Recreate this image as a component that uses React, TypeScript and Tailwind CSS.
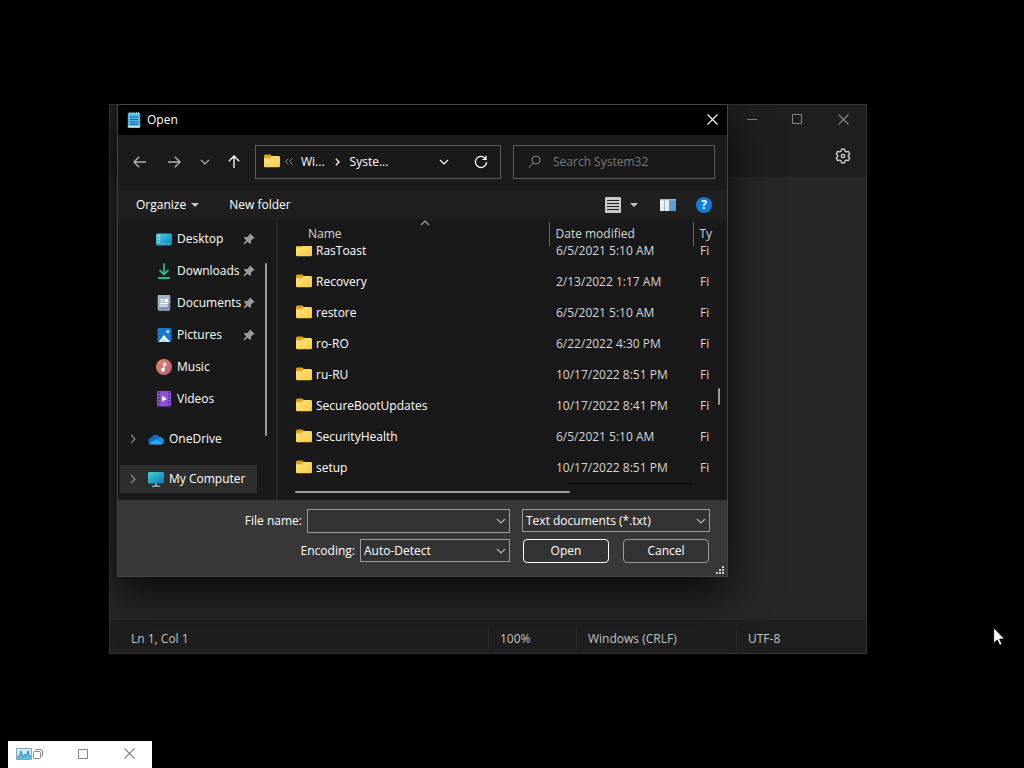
import type { ReactNode } from "react";

type IconProps = { className?: string };

const files = [
  { name: "RasToast", date: "6/5/2021 5:10 AM" },
  { name: "Recovery", date: "2/13/2022 1:17 AM" },
  { name: "restore", date: "6/5/2021 5:10 AM" },
  { name: "ro-RO", date: "6/22/2022 4:30 PM" },
  { name: "ru-RU", date: "10/17/2022 8:51 PM" },
  { name: "SecureBootUpdates", date: "10/17/2022 8:41 PM" },
  { name: "SecurityHealth", date: "6/5/2021 5:10 AM" },
  { name: "setup", date: "10/17/2022 8:51 PM" },
];

function Folder({ className = "" }: IconProps) {
  return (
    <svg viewBox="0 0 16 14" className={`h-3.5 w-4 shrink-0 ${className}`} aria-hidden="true">
      <defs>
        <linearGradient id="folder-face" x1="0" y1="0" x2="1" y2="1">
          <stop offset="0" stopColor="#ffe680" />
          <stop offset="1" stopColor="#f9c845" />
        </linearGradient>
      </defs>
      <path d="M0 2a1.500 1.500 0 0 1 1.500-1.500h4.500a1.500 1.500 0 0 1 1.500 1.500h7A1.500 1.500 0 0 1 16 3.500v3H0z" fill="#e3a21a" />
      <path d="M0 4.300h5.500L7.500 2h7A1.500 1.500 0 0 1 16 3.500v8.500a1.200 1.200 0 0 1-1.200 1.200H1.200A1.200 1.200 0 0 1 0 12z" fill="url(#folder-face)" />
    </svg>
  );
}

function Chevron({ className = "" }: IconProps) {
  return (
    <svg viewBox="0 0 10 6" className={`h-1.5 w-2.5 ${className}`} fill="none" stroke="currentColor" strokeWidth="1.2" aria-hidden="true">
      <path d="M1 1l4 4 4-4" />
    </svg>
  );
}

function Cross({ className = "" }: IconProps) {
  return (
    <svg viewBox="0 0 11 11" className={`size-[11px] ${className}`} fill="none" stroke="currentColor" strokeWidth="1.1" aria-hidden="true">
      <path d="M.5.5l10 10M10.500.5l-10 10" />
    </svg>
  );
}

function Maximize() {
  return (
    <svg viewBox="0 0 10 10" className="size-2.5" fill="none" stroke="currentColor" aria-hidden="true">
      <path d="M.5.5h9v9h-9z" />
    </svg>
  );
}

function Pin() {
  return (
    <svg viewBox="0 0 12 12" className="size-3 text-[#9a9a9a]" fill="currentColor" aria-hidden="true">
      <path d="M7.200.4l4.400 4.400-1 1-.7-.1-1.900 1.900.2 2.300-1.200 1.200-2.300-2.300L1.300 11.500l-.8-.8 2.700-3.400L.9 5l1.200-1.200 2.300.2 1.900-1.900-.1-.7z" />
    </svg>
  );
}

const desktopIcon = (
  <svg viewBox="0 0 16 13" className="h-[13px] w-4" aria-hidden="true">
    <defs>
      <linearGradient id="desk" x1="0" y1="0" x2="1" y2="1">
        <stop offset="0" stopColor="#4fd3ee" />
        <stop offset="1" stopColor="#0b7fb5" />
      </linearGradient>
    </defs>
    <rect y=".5" width="16" height="12" rx="1.500" fill="url(#desk)" />
    <path d="M2 2.500h1.500V4H2zM2 5.500h1.500V7H2zM2 8.500h1.500V10H2z" fill="#d5f6ff" />
    <path d="M4.500 11h1.200M7 11h1.200M9.500 11h1.200M12 11h1.500" stroke="#9be4f7" />
  </svg>
);

const downloadIcon = (
  <svg viewBox="0 0 14 16" className="h-4 w-3.5" fill="none" stroke="#2eb48a" strokeWidth="1.800" aria-hidden="true">
    <path d="M7 .5v11M2.500 7L7 11.500 11.500 7M1 15h12" />
  </svg>
);

const documentIcon = (
  <svg viewBox="0 0 14 16" className="h-4 w-3.5" aria-hidden="true">
    <rect x=".8" width="12.400" height="16" rx="1.200" fill="#8195ae" />
    <path d="M.8 1.200A1.200 1.200 0 0 1 2 0h10a1.200 1.200 0 0 1 1.200 1.200V8L.8 14z" fill="#a2b3c8" />
    <path d="M3 4.500h3.500M3 6.500h3.500M3 8.700h8M3 11h8" stroke="#fff" strokeWidth="1.200" />
    <path d="M7.500 3.800h3.500v3.300H7.500z" fill="#fff" />
  </svg>
);

const pictureIcon = (
  <svg viewBox="0 0 15 14" className="h-3.5 w-[15px]" aria-hidden="true">
    <rect x=".5" width="14" height="14" rx="1.500" fill="#1c78cd" />
    <path d="M1.500 14L7 7l6 7z" fill="#f3faff" />
    <path d="M3 14l4-3.500L11.500 14z" fill="#b9dbf6" />
    <circle cx="10.800" cy="3.600" r="1.400" fill="#fff" />
  </svg>
);

const musicIcon = (
  <svg viewBox="0 0 16 16" className="size-4" aria-hidden="true">
    <defs>
      <linearGradient id="music" x1="0" y1="0" x2="1" y2="1">
        <stop offset="0" stopColor="#e88962" />
        <stop offset="1" stopColor="#b05a80" />
      </linearGradient>
    </defs>
    <circle cx="8" cy="8" r="8" fill="url(#music)" />
    <circle cx="6.800" cy="10.800" r="1.900" fill="#fff" />
    <path d="M8.100 10.800V3.500c.4 1.500 2.200 1.500 2.400 3" fill="none" stroke="#fff" strokeWidth="1.300" />
  </svg>
);

const videoIcon = (
  <svg viewBox="0 0 14 16" className="h-4 w-3.5" aria-hidden="true">
    <rect width="14" height="15.500" rx="1.200" fill="#8b52d8" />
    <path d="M2 1v14M12 1v14" stroke="#4b2395" strokeWidth="1.600" strokeDasharray="1.700 1.500" />
    <path d="M5 4.800v6L10 7.800z" fill="#fff" />
  </svg>
);

const cloudIcon = (
  <svg viewBox="0 0 16 11" className="h-[11px] w-4" aria-hidden="true">
    <path d="M3.500 10.500A3.500 3.500 0 0 1 3.200 3.600 5 5 0 0 1 12 3.200 3.700 3.700 0 0 1 12.500 10.500z" fill="#0f6cbf" />
    <path d="M1 9.500L8.500 5l6.700 4A3 3 0 0 1 12.800 10.500H3.500A3.500 3.500 0 0 1 1 9.500z" fill="#2aa6ee" />
    <path d="M9 5.200l3-2a3.700 3.700 0 0 1 3.500 5.600z" fill="#1b8ddd" />
  </svg>
);

const computerIcon = (
  <svg viewBox="0 0 16 16" className="size-4" aria-hidden="true">
    <defs>
      <linearGradient id="screen" x1="0" y1="0" x2="1" y2="1">
        <stop offset="0" stopColor="#42d6d2" />
        <stop offset="1" stopColor="#1173b8" />
      </linearGradient>
    </defs>
    <rect y="1" width="16" height="11.500" rx="1" fill="url(#screen)" />
    <path d="M7 12.500h2V15H7z" fill="#93a4b4" />
    <path d="M4 15.200h8" stroke="#c9d3dc" />
  </svg>
);

const places: { label: string; icon: ReactNode; pinned: boolean }[] = [
  { label: "Desktop", icon: desktopIcon, pinned: true },
  { label: "Downloads", icon: downloadIcon, pinned: true },
  { label: "Documents", icon: documentIcon, pinned: true },
  { label: "Pictures", icon: pictureIcon, pinned: true },
  { label: "Music", icon: musicIcon, pinned: false },
  { label: "Videos", icon: videoIcon, pinned: false },
];

function TreeItem({ label, icon, selected = false }: { label: string; icon: ReactNode; selected?: boolean }) {
  return (
    <button
      type="button"
      className={`ml-0.5 flex h-7 w-[137px] items-center text-left ${selected ? "bg-[#2e2e2e]" : ""}`}
    >
      <span className="flex w-7 items-center pl-2">
        <Chevron className="-rotate-90 text-[#8a8a8a]" />
      </span>
      <span className="flex w-[21px] items-center">{icon}</span>
      <span className="whitespace-nowrap">{label}</span>
    </button>
  );
}

function Notepad() {
  const segment = "flex h-5 items-center border-l border-[#2c2c2c] pl-[11px]";
  return (
    <section
      aria-label="Notepad"
      className="absolute left-[109px] top-[104px] flex h-[550px] w-[758px] flex-col border border-[#353535] bg-[#272727] text-[#c4c4c4]"
    >
      <header className="h-[72px] bg-[#1f1f1f]">
        <div className="flex h-7 justify-end text-[#858585]">
          <button type="button" aria-label="Minimize" className="flex w-[45px] items-center justify-center">
            <svg viewBox="0 0 10 10" className="size-2.5" stroke="currentColor" aria-hidden="true">
              <path d="M0 5.500h10" />
            </svg>
          </button>
          <button type="button" aria-label="Maximize" className="flex w-[46px] items-center justify-center">
            <Maximize />
          </button>
          <button type="button" aria-label="Close" className="flex w-[46px] items-center justify-center">
            <Cross />
          </button>
        </div>
        <div className="flex h-[46px] items-center justify-end pr-[15px]">
          <button type="button" aria-label="Settings" className="text-[#dedede]">
            <svg viewBox="0 0 16 16" className="size-4" fill="none" stroke="currentColor" strokeWidth="1.200" strokeLinejoin="round" aria-hidden="true">
              <path d="M6.500 1.200h3l.5 2 1.300.8 2-.6 1.500 2.600L13.300 7.400v1.200l1.500 1.400-1.500 2.600-2-.6-1.300.8-.5 2h-3l-.5-2-1.300-.8-2 .6L1.200 10l1.500-1.400V7.400L1.200 6l1.500-2.600 2 .6L6 3.200z" />
              <circle cx="8" cy="8" r="1.700" />
            </svg>
          </button>
        </div>
      </header>
      <div className="flex-1" />
      <footer className="flex h-[33px] items-center bg-[#1f1f1f] pt-1 text-[12px]">
        <span className="flex-1 pl-[21px]">Ln 1, Col 1</span>
        <span className={`${segment} w-[88px]`}>100%</span>
        <span className={`${segment} w-[160px]`}>Windows (CRLF)</span>
        <span className={`${segment} w-[130px]`}>UTF-8</span>
      </footer>
    </section>
  );
}

function NavigationBar() {
  return (
    <div className="flex h-[55px] items-center bg-[#1b1b1b] pb-0.5 pl-1 pr-3 text-white">
      <button type="button" aria-label="Back" className="flex w-[35px] justify-center text-[#b0b0b0]">
        <svg viewBox="0 0 13 12" className="h-3 w-[13px]" fill="none" stroke="currentColor" strokeWidth="1.400" aria-hidden="true">
          <path d="M13 6H1M6.200.8L1 6l5.200 5.200" />
        </svg>
      </button>
      <button type="button" aria-label="Forward" className="flex w-[35px] justify-center text-[#b0b0b0]">
        <svg viewBox="0 0 13 12" className="h-3 w-[13px]" fill="none" stroke="currentColor" strokeWidth="1.400" aria-hidden="true">
          <path d="M0 6h12M6.800.8L12 6l-5.200 5.200" />
        </svg>
      </button>
      <button type="button" aria-label="Recent locations" className="flex w-[26px] justify-center text-[#b0b0b0]">
        <Chevron />
      </button>
      <button type="button" aria-label="Up" className="flex w-8 justify-center">
        <svg viewBox="0 0 12 13" className="h-[13px] w-3" fill="none" stroke="currentColor" strokeWidth="1.300" aria-hidden="true">
          <path d="M6 13V1M.8 6.200L6 1l5.200 5.200" />
        </svg>
      </button>
      <div className="ml-[5px] flex h-[34px] flex-1 items-center border border-[#5c5c5c] bg-[#191919] pl-2 pr-3">
        <Folder className="mb-0.5" />
        <svg viewBox="0 0 8 7" className="ml-[5px] h-[7px] w-2" fill="none" stroke="#8c8c8c" aria-hidden="true">
          <path d="M3.500.5l-3 3 3 3M7.500.5l-3 3 3 3" />
        </svg>
        <button type="button" className="ml-2">Wi...</button>
        <svg viewBox="0 0 5 8" className="ml-2.5 h-2 w-[5px]" fill="none" stroke="currentColor" strokeWidth="1.300" aria-hidden="true">
          <path d="M.8.8L4 4 .8 7.200" />
        </svg>
        <button type="button" className="ml-2.5">Syste...</button>
        <button type="button" aria-label="Previous locations" className="ml-auto">
          <Chevron />
        </button>
        <button type="button" aria-label="Refresh" className="ml-[25px]">
          <svg viewBox="0 0 14 14" className="size-3.5" fill="none" stroke="currentColor" strokeWidth="1.300" aria-hidden="true">
            <path d="M11.800 4A5.600 5.600 0 1 0 12.600 7M12 .8v3.500H8.500" />
          </svg>
        </button>
      </div>
      <label className="ml-3 flex h-[34px] w-[202px] items-center border border-[#5c5c5c] bg-[#191919] pl-3.5 pr-2">
        <svg viewBox="0 0 13 14" className="h-3.5 w-[13px] shrink-0" fill="none" stroke="#858585" aria-hidden="true">
          <circle cx="8" cy="5" r="4" />
          <path d="M5.200 8L.8 12.800" />
        </svg>
        <input
          type="text"
          aria-label="Search System32"
          placeholder="Search System32"
          className="ml-3 min-w-0 flex-1 bg-transparent text-white outline-none placeholder:text-[#7a7a7a]"
        />
      </label>
    </div>
  );
}

function CommandBar() {
  return (
    <div className="flex h-[30px] items-center bg-[#1f1f1f] pl-[18px] pr-[15px] text-white">
      <button type="button" className="flex items-center gap-[5px]">
        Organize
        <svg viewBox="0 0 8 4" className="h-1 w-2" fill="#c8c8c8" aria-hidden="true">
          <path d="M0 0h8L4 4z" />
        </svg>
      </button>
      <button type="button" className="ml-[30px]">New folder</button>
      <button type="button" aria-label="Change your view" className="ml-auto">
        <svg viewBox="0 0 16 16" className="size-4" aria-hidden="true">
          <rect width="16" height="16" rx="1" fill="#c9c9c9" />
          <path d="M2 3.500h12M2 6.500h12M2 9.500h12M2 12.500h12" stroke="#1f1f1f" />
        </svg>
      </button>
      <button type="button" aria-label="More views" className="ml-[9px]">
        <svg viewBox="0 0 8 4" className="h-1 w-2" fill="#c8c8c8" aria-hidden="true">
          <path d="M0 0h8L4 4z" />
        </svg>
      </button>
      <button type="button" aria-label="Preview pane" className="ml-[22px]">
        <svg viewBox="0 0 16 12" className="h-3 w-4" aria-hidden="true">
          <rect width="16" height="12" fill="#e9eef2" />
          <path d="M0 0h16v1.200H0z" fill="#a9b4bd" />
          <path d="M9 1.200h7V12H9z" fill="#5f9fd0" />
          <path d="M4.500 1.200V12" stroke="#9eb3c4" />
        </svg>
      </button>
      <button
        type="button"
        aria-label="Help"
        className="ml-5 flex size-4 items-center justify-center rounded-full bg-[#0e7fd6] text-[12px] font-bold leading-4"
      >
        ?
      </button>
    </div>
  );
}

function Sidebar() {
  return (
    <nav aria-label="Places" className="relative w-[158px] shrink-0 pt-[3px] text-white">
      {places.map((place) => (
        <button key={place.label} type="button" className="flex h-8 w-full items-center pl-[38px] text-left">
          <span className="flex w-[21px] shrink-0 items-center">
            <span className="flex w-4 justify-center">{place.icon}</span>
          </span>
          <span className="w-[66px] whitespace-nowrap">{place.label}</span>
          {place.pinned && <Pin />}
        </button>
      ))}
      <div className="mt-[10px] flex flex-col gap-3">
        <TreeItem label="OneDrive" icon={cloudIcon} />
        <TreeItem label="My Computer" icon={computerIcon} selected />
      </div>
      <div className="absolute left-[147px] top-[43px] h-[173px] w-0.5 rounded bg-[#9b9b9b]" />
    </nav>
  );
}

function FileList() {
  return (
    <div className="relative min-w-0 flex-1 border-l-2 border-[#262626] pr-[17px] pt-0.5">
      <table className="w-full table-fixed border-collapse text-left">
        <colgroup>
          <col />
          <col className="w-36" />
          <col className="w-[17px]" />
        </colgroup>
        <thead>
          <tr className="h-6 text-[#d6d6d6]">
            <th className="p-0 pl-[30px] font-normal">Name</th>
            <th className="border-l border-[#6a6a6a] p-0 pl-1.5 font-normal">Date modified</th>
            <th className="whitespace-nowrap border-l border-[#6a6a6a] p-0 pl-1.5 font-normal">Ty</th>
          </tr>
        </thead>
        <tbody>
          {files.map((file, index) => {
            const height = index === 0 ? "h-5" : "h-[31px]";
            return (
              <tr key={file.name}>
                <td className="p-0 pl-[18px] text-white">
                  <div className={`flex items-end gap-1 ${height}`}>
                    <span className={`flex items-end overflow-hidden ${height}`}>
                      <span className="flex h-[31px] shrink-0 items-center">
                        <Folder className="mb-0.5" />
                      </span>
                    </span>
                    <span className="flex h-[31px] items-center">{file.name}</span>
                  </div>
                </td>
                <td className="p-0 pl-[7px] text-[#d6d6d6]">
                  <div className={`flex items-end ${height}`}>
                    <span className="flex h-[31px] items-center">{file.date}</span>
                  </div>
                </td>
                <td className="p-0 pl-[7px] text-[#d6d6d6]">
                  <div className={`flex items-end ${height}`}>
                    <span className="flex h-[31px] items-center">Fi</span>
                  </div>
                </td>
              </tr>
            );
          })}
        </tbody>
      </table>
      <Chevron className="absolute left-[142px] top-0 rotate-180 text-[#a8a8a8]" />
      <div className="absolute left-[290px] top-[263px] h-px w-[124px] bg-black" />
      <div className="absolute left-[17px] top-[271px] h-0.5 w-[275px] rounded bg-[#9b9b9b]" />
      <div className="absolute right-[7px] top-[168px] h-[17px] w-0.5 rounded bg-[#9b9b9b]" />
    </div>
  );
}

function DialogFooter() {
  const field = "w-full appearance-none border border-[#9b9b9b] bg-[#333333] px-[3px] text-white outline-none";
  const arrow = "pointer-events-none absolute right-1 top-[9px] text-[#b5b5b5]";
  return (
    <footer className="relative flex h-[76px] flex-col gap-1.5 bg-[#383838] pr-[17px] pt-[9px] text-white">
      <div className="flex items-start justify-end">
        <label htmlFor="file-name" className="leading-6">File name:</label>
        <div className="relative ml-[5px] mr-3 w-[203px]">
          <input id="file-name" type="text" className={`block h-6 ${field}`} />
          <Chevron className={arrow} />
        </div>
        <div className="relative w-[188px]">
          <select aria-label="File type" className={`block h-[23px] ${field}`}>
            <option>Text documents (*.txt)</option>
          </select>
          <Chevron className={arrow} />
        </div>
      </div>
      <div className="flex items-start justify-end">
        <label htmlFor="encoding" className="leading-6">Encoding:</label>
        <div className="relative ml-[5px] mr-[13px] w-[150px]">
          <select id="encoding" className={`block h-[23px] ${field}`}>
            <option>Auto-Detect</option>
          </select>
          <Chevron className={arrow} />
        </div>
        <button type="button" className="mr-3.5 h-6 w-[86px] rounded border border-white bg-[#333333]">
          Open
        </button>
        <button type="button" className="mr-px h-6 w-[86px] rounded border border-[#9b9b9b] bg-[#333333]">
          Cancel
        </button>
      </div>
      <svg viewBox="0 0 8 8" className="absolute bottom-0.5 right-[3px] size-2" fill="#cfcfcf" aria-hidden="true">
        <path d="M6 0h2v2H6zM3 3h2v2H3zM6 3h2v2H6zM0 6h2v2H0zM3 6h2v2H3zM6 6h2v2H6z" />
      </svg>
    </footer>
  );
}

function OpenDialog() {
  return (
    <div
      role="dialog"
      aria-labelledby="dialog-title"
      className="absolute left-[117px] top-[104px] w-[611px] border border-[#454545] bg-[#191919] text-[12px] leading-4 shadow-[0_16px_40px_rgba(0,0,0,0.75)]"
    >
      <header className="flex h-[30px] items-center bg-black pl-[9px] pr-[9px] text-white">
        <svg viewBox="0 0 14 16" className="h-4 w-3.5" aria-hidden="true">
          <rect x=".8" y="1" width="12.400" height="14.500" rx="1" fill="#4fb9e3" />
          <path d="M.8 13.800h12.400v1a1 1 0 0 1-1 1H1.800a1 1 0 0 1-1-1z" fill="#c9dde8" />
          <path d="M2.800 0v2.500M5 0v2.500M7.200 0v2.500M9.400 0v2.500M11.500 0v2.500" stroke="#a8e2f7" strokeWidth=".9" />
          <path d="M3 5h8M3 7.500h8M3 10h8M3 12.300h8" stroke="#14648f" />
        </svg>
        <h1 id="dialog-title" className="ml-1.5">Open</h1>
        <button type="button" aria-label="Close" className="ml-auto pb-0.5">
          <Cross />
        </button>
      </header>
      <NavigationBar />
      <CommandBar />
      <div className="flex h-[280px]">
        <Sidebar />
        <FileList />
      </div>
      <DialogFooter />
    </div>
  );
}

function MinimizedWindow() {
  return (
    <div className="absolute left-2 top-[741px] flex h-[27px] w-36 items-center bg-white pb-0.5 pl-2 text-[#858585]">
      <svg viewBox="0 0 16 12" className="h-3 w-4" aria-hidden="true">
        <path d="M.5.5h15v11H.5z" fill="#cfeafa" stroke="#8ba7b8" />
        <path d="M1 9l2.500-1L5 3l2 6 2-3 1.500 2L12 3l1.500 5 1.500 1v2H1z" fill="#62bdea" />
        <path d="M1 9l2.500-1L5 3l2 6 2-3 1.500 2L12 3l1.500 5 1.500 1" fill="none" stroke="#2478a8" strokeWidth=".8" />
      </svg>
      <button type="button" aria-label="Restore" className="ml-px">
        <svg viewBox="0 0 10 10" className="size-2.5" fill="none" stroke="currentColor" aria-hidden="true">
          <rect x=".5" y="2.500" width="7" height="7" rx="1" />
          <path d="M2.500.5h5a2 2 0 0 1 2 2v5" />
        </svg>
      </button>
      <button type="button" aria-label="Maximize" className="ml-[35px]">
        <Maximize />
      </button>
      <button type="button" aria-label="Close" className="ml-9">
        <Cross />
      </button>
    </div>
  );
}

export default function App() {
  return (
    <main className="relative min-h-screen overflow-hidden bg-black font-['Open_Sans','Noto_Sans',sans-serif]">
      <Notepad />
      <OpenDialog />
      <MinimizedWindow />
      <svg viewBox="0 0 12 19" className="absolute left-[993px] top-[627px] h-[19px] w-3" aria-hidden="true">
        <path d="M.7.8v15.500l3.600-3.400 2.400 5.400 2.300-1-2.400-5.300h4.900z" fill="#fff" stroke="#000" strokeWidth=".8" />
      </svg>
    </main>
  );
}
